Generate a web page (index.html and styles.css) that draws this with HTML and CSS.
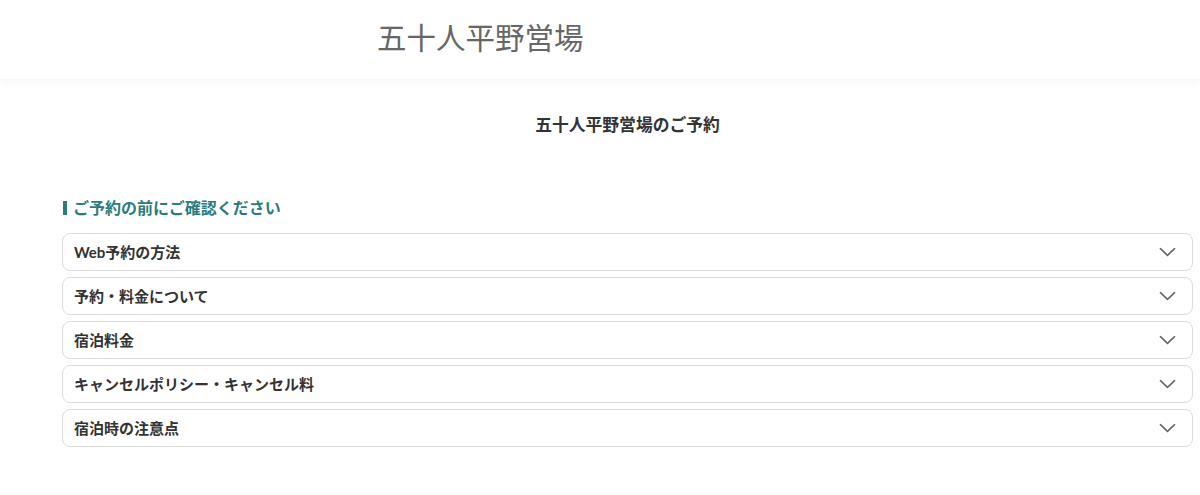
FILE: index.html
```html
<!DOCTYPE html>
<html lang="ja">
<head>
<meta charset="utf-8">
<title>五十人平野営場のご予約</title>
<link rel="stylesheet" href="styles.css">
</head>
<body>
<header class="site-header">
  <h1 class="site-title">五十人平野営場</h1>
</header>
<main class="content">
  <h2 class="page-title">五十人平野営場のご予約</h2>
  <section class="notice">
    <h3 class="section-heading">ご予約の前にご確認ください</h3>
    <ul class="accordion">
      <li class="acc-item"><span class="acc-label">Web予約の方法</span><svg class="chev" viewBox="0 0 18 10" width="17" height="10"><path d="M1.5 1.5 L9 8.5 L16.5 1.5" fill="none" stroke="#666" stroke-width="1.7" stroke-linecap="round" stroke-linejoin="round"/></svg></li>
      <li class="acc-item"><span class="acc-label">予約・料金について</span><svg class="chev" viewBox="0 0 18 10" width="17" height="10"><path d="M1.5 1.5 L9 8.5 L16.5 1.5" fill="none" stroke="#666" stroke-width="1.7" stroke-linecap="round" stroke-linejoin="round"/></svg></li>
      <li class="acc-item"><span class="acc-label">宿泊料金</span><svg class="chev" viewBox="0 0 18 10" width="17" height="10"><path d="M1.5 1.5 L9 8.5 L16.5 1.5" fill="none" stroke="#666" stroke-width="1.7" stroke-linecap="round" stroke-linejoin="round"/></svg></li>
      <li class="acc-item"><span class="acc-label">キャンセルポリシー・キャンセル料</span><svg class="chev" viewBox="0 0 18 10" width="17" height="10"><path d="M1.5 1.5 L9 8.5 L16.5 1.5" fill="none" stroke="#666" stroke-width="1.7" stroke-linecap="round" stroke-linejoin="round"/></svg></li>
      <li class="acc-item"><span class="acc-label">宿泊時の注意点</span><svg class="chev" viewBox="0 0 18 10" width="17" height="10"><path d="M1.5 1.5 L9 8.5 L16.5 1.5" fill="none" stroke="#666" stroke-width="1.7" stroke-linecap="round" stroke-linejoin="round"/></svg></li>
    </ul>
  </section>
</main>
</body>
</html>
```

FILE: styles.css
```css
* { box-sizing: border-box; }
html, body { margin: 0; padding: 0; background: #fff; }
body {
  font-family: Lato, "Noto Sans CJK JP", sans-serif;
  color: #333;
}
.site-header {
  height: 79px;
  background: #fff;
  box-shadow: 0 2px 10px rgba(40, 60, 90, 0.06);
  padding-left: 377px;
  display: flex;
  align-items: center;
  position: relative;
}
.site-title {
  margin: 0 0 6px 0;
  font-family: "Noto Sans CJK JP", sans-serif;
  font-weight: 400;
  font-size: 29.5px;
  line-height: 1;
  color: #666;
}
.content {
  padding: 0 7px 0 62px;
}
.page-title {
  margin: 36px 0 0 0;
  text-align: center;
  font-size: 16.8px;
  font-weight: 700;
  line-height: 20px;
  color: #333;
}
.notice { margin-top: 64px; }
.section-heading {
  margin: 0 0 16px 0;
  display: flex;
  align-items: center;
  font-size: 16px;
  font-weight: 700;
  line-height: 18px;
  color: #2a7b7b;
}
.section-heading::before {
  content: "";
  width: 4px;
  height: 14px;
  background: #2a7b7b;
  margin: 0 6px 0 1px;
}
.accordion {
  list-style: none;
  margin: 0;
  padding: 0;
  display: flex;
  flex-direction: column;
  gap: 6px;
}
.acc-item {
  height: 38px;
  border: 1px solid #dcdcdc;
  border-radius: 8px;
  display: flex;
  align-items: center;
  justify-content: space-between;
  padding: 0 16px 0 11px;
}
.acc-label {
  font-size: 15px;
  font-weight: 700;
  color: #333;
  line-height: 1;
  padding-top: 1px;
}
.chev { display: block; }
```
